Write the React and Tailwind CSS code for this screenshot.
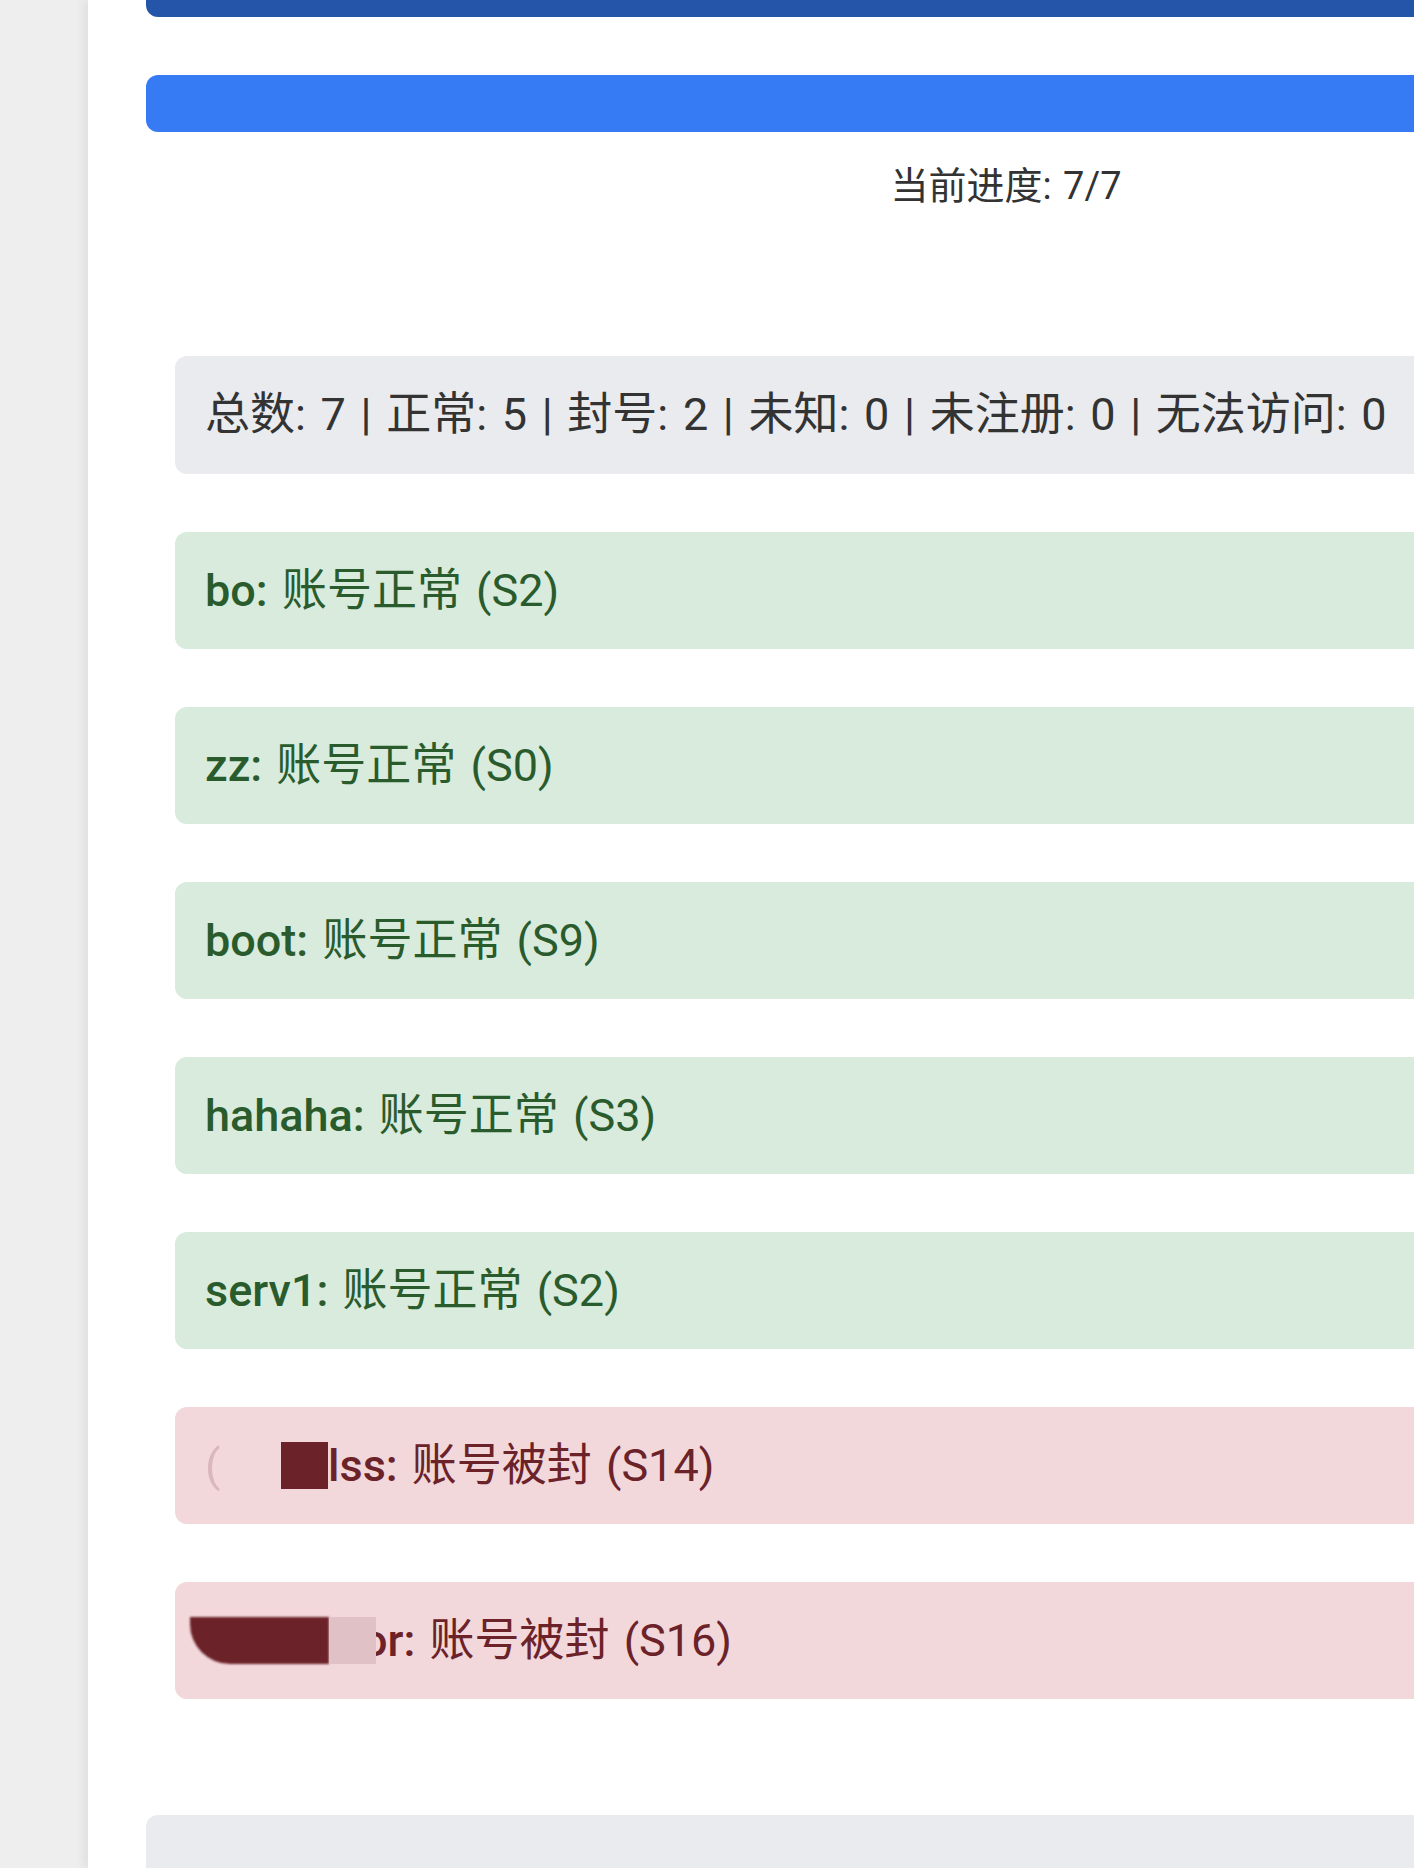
const results = [
  { name: 'bo', status: '账号正常', server: 'S2', ok: true },
  { name: 'zz', status: '账号正常', server: 'S0', ok: true },
  { name: 'boot', status: '账号正常', server: 'S9', ok: true },
  { name: 'hahaha', status: '账号正常', server: 'S3', ok: true },
  { name: 'serv1', status: '账号正常', server: 'S2', ok: true },
]

function ResultRow({ children, ok }) {
  return (
    <div
      className={`mt-[58px] flex h-[117px] items-center rounded-xl px-[30px] text-[45px] whitespace-nowrap [word-spacing:3px] ${
        ok ? 'bg-[#D8EBDC] text-[#2A5B2D]' : 'bg-[#F2D7DB] text-[#6B2228]'
      }`}
    >
      {children}
    </div>
  )
}

export default function App() {
  return (
    <div
      className="flex h-[1868px] w-[1414px] overflow-hidden bg-[#EEEEEE]"
      style={{ fontFamily: 'Roboto, "Noto Sans CJK SC", sans-serif' }}
    >
      <main className="ml-[88px] w-[1836px] shrink-0 bg-white px-[58px] shadow-[-6px_0_8px_rgba(0,0,0,0.05)]">
        <div className="h-[17px] rounded-b-xl bg-[#2455A9]" />
        <div className="mt-[58px] h-[57px] rounded-xl bg-[#377BF4]" />
        <p className="mt-[26px] text-center text-[38px] leading-[57px] text-[#333333] [word-spacing:2px]">
          当前进度: 7/7
        </p>

        <section className="mt-[141px] px-[29px]">
          <div className="flex h-[118px] items-center rounded-xl bg-[#E9EBEE] px-[30px] text-[45px] whitespace-nowrap text-[#333333] [word-spacing:3.5px]">
            总数: 7 | 正常: 5 | 封号: 2 | 未知: 0 | 未注册: 0 | 无法访问: 0
          </div>

          {results.map((r) => (
            <ResultRow key={r.name} ok={r.ok}>
              <span className="font-medium">{r.name}:</span>
              <span>&nbsp;{r.status} ({r.server})</span>
            </ResultRow>
          ))}

          <ResultRow ok={false}>
            <span className="w-[76px] text-[#C9A3A8] opacity-60">(</span>
            <span className="h-[47px] w-[47px] shrink-0 bg-[#6B2228]" />
            <span className="font-medium">lss:</span>
            <span>&nbsp;账号被封 (S14)</span>
          </ResultRow>

          <ResultRow ok={false}>
            <span className="-ml-[15px] h-[47px] w-[139px] shrink-0 rounded-bl-[40px] bg-[#6B2228] blur-[1px]" />
            <span className="relative z-10 -mr-[14px] h-[47px] w-[47px] shrink-0 bg-[#E0C1C5]" />
            <span className="font-medium">or:</span>
            <span>&nbsp;账号被封 (S16)</span>
          </ResultRow>
        </section>

        <div className="mt-[116px] h-[120px] rounded-t-xl bg-[#E9EBEE]" />
      </main>
    </div>
  )
}
